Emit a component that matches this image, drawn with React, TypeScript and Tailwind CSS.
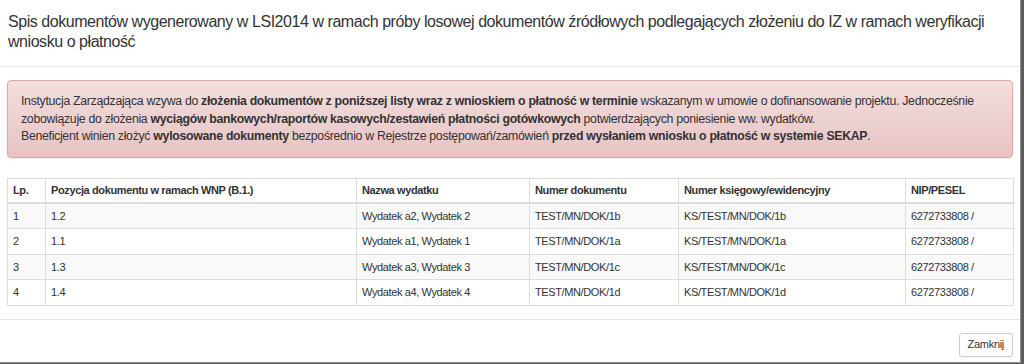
import React from "react";

// One row of the drawn-documents list
interface IDoc {
  lp: number;
  position: string;
  name: string;
  docNo: string;
  bookNo: string;
  nip: string;
}

const docs: IDoc[] = [
  { lp: 1, position: "1.2", name: "Wydatek a2, Wydatek 2", docNo: "TEST/MN/DOK/1b", bookNo: "KS/TEST/MN/DOK/1b", nip: "6272733808 /" },
  { lp: 2, position: "1.1", name: "Wydatek a1, Wydatek 1", docNo: "TEST/MN/DOK/1a", bookNo: "KS/TEST/MN/DOK/1a", nip: "6272733808 /" },
  { lp: 3, position: "1.3", name: "Wydatek a3, Wydatek 3", docNo: "TEST/MN/DOK/1c", bookNo: "KS/TEST/MN/DOK/1c", nip: "6272733808 /" },
  { lp: 4, position: "1.4", name: "Wydatek a4, Wydatek 4", docNo: "TEST/MN/DOK/1d", bookNo: "KS/TEST/MN/DOK/1d", nip: "6272733808 /" },
];

const headers = [
  "Lp.",
  "Pozycja dokumentu w ramach WNP (B.1.)",
  "Nazwa wydatku",
  "Numer dokumentu",
  "Numer księgowy/ewidencyjny",
  "NIP/PESEL",
];

export default function App() {
  return (
    // dark backdrop peeking out at the right and bottom edges
    <div
      className="w-[1024px] h-[364px] bg-[#5c5c5c] overflow-hidden text-[#333]"
      style={{ fontFamily: '"Liberation Sans", Arial, sans-serif' }}
    >
      <div className="w-[1021px] h-[363px] bg-white border-r border-b border-[#8a8a8a] flex flex-col">
        {/* Modal header */}
        <div className="pl-[8px] pr-[20px] pt-[12px] pb-[14px] border-b border-[#e5e5e5]">
          <h4 className="text-[16px] tracking-[-0.45px] leading-[20px] m-0">
            Spis dokumentów wygenerowany w LSI2014 w ramach próby losowej dokumentów źródłowych podlegających złożeniu do IZ w ramach weryfikacji wniosku o płatność
          </h4>
        </div>

        {/* Modal body */}
        <div className="px-[7px] pt-[13px] pb-[13px]">
          <div className="rounded-[4px] border border-[#dca7a7] bg-gradient-to-b from-[#f2dede] to-[#e7c3c3] shadow-[0_1px_2px_rgba(0,0,0,0.08)] pl-[13px] pr-[8px] pt-[12px] pb-[11px] text-[12.3px] tracking-[-0.3px] leading-[17.5px] mb-[20px]">
            <p>
              Instytucja Zarządzająca wzywa do <b>złożenia dokumentów z poniższej listy wraz z wnioskiem o płatność w terminie</b> wskazanym w umowie o dofinansowanie projektu. Jednocześnie zobowiązuje do złożenia <b>wyciągów bankowych/raportów kasowych/zestawień płatności gotówkowych</b> potwierdzających poniesienie ww. wydatków.
            </p>
            <p>
              Beneficjent winien złożyć <b>wylosowane dokumenty</b> bezpośrednio w Rejestrze postępowań/zamówień <b>przed wysłaniem wniosku o płatność w systemie SEKAP</b>.
            </p>
          </div>

          <table className="w-full table-fixed border-collapse border border-[#ddd] text-[11px] tracking-[-0.38px]">
            <colgroup>
              <col className="w-[38px]" />
              <col className="w-[311px]" />
              <col className="w-[173px]" />
              <col className="w-[149px]" />
              <col className="w-[227px]" />
              <col className="w-[108px]" />
            </colgroup>
            <thead>
              <tr>
                {headers.map((h) => (
                  <th
                    key={h}
                    className="text-left font-bold border border-[#ddd] border-b-2 px-[5px] pt-[3px] pb-[3px] leading-[17px]"
                  >
                    {h}
                  </th>
                ))}
              </tr>
            </thead>
            <tbody>
              {docs.map((d, i) => (
                <tr key={d.lp} className={i % 2 === 0 ? "bg-[#f9f9f9]" : "bg-white"}>
                  <td className="border border-[#ddd] px-[5px] py-[4px] leading-[16.5px]">{d.lp}</td>
                  <td className="border border-[#ddd] px-[5px] py-[4px] leading-[16.5px]">{d.position}</td>
                  <td className="border border-[#ddd] px-[5px] py-[4px] leading-[16.5px]">{d.name}</td>
                  <td className="border border-[#ddd] px-[5px] py-[4px] leading-[16.5px]">{d.docNo}</td>
                  <td className="border border-[#ddd] px-[5px] py-[4px] leading-[16.5px]">{d.bookNo}</td>
                  <td className="border border-[#ddd] px-[5px] py-[4px] leading-[16.5px]">{d.nip}</td>
                </tr>
              ))}
            </tbody>
          </table>
        </div>

        {/* Modal footer */}
        <div className="border-t border-[#e5e5e5] flex justify-end pr-[7px] pt-[13px]">
          <button className="h-[24px] px-[8px] text-[11px] tracking-[-0.3px] rounded-[3px] border border-[#ccc] bg-white shadow-[0_1px_1px_rgba(0,0,0,0.05)]">
            Zamknij
          </button>
        </div>
      </div>
    </div>
  );
}
